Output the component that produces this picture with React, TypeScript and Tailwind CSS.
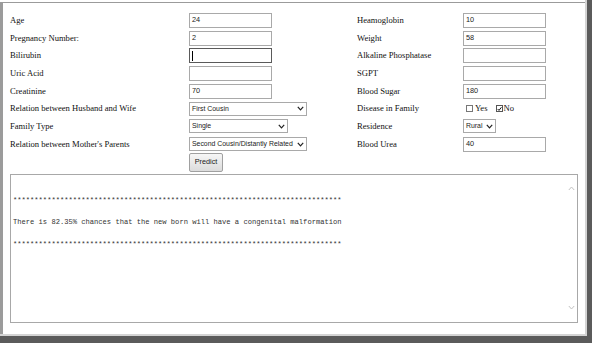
import React from 'react';

const serif = "font-['Liberation_Serif','Times_New_Roman',serif]";
const sans = "font-['Liberation_Sans',Arial,sans-serif]";

const Label = ({ children }: { children: React.ReactNode }) => (
  <div className={`${serif} text-[8.6px] text-[#111] flex items-center`}>{children}</div>
);

const TextBox = ({ value, focused }: { value?: string; focused?: boolean }) => (
  <div className="flex items-center">
    <div
      className={`w-[83px] h-[15px] bg-white flex items-center pl-[2px] ${sans} text-[7.3px] text-[#222] border ${
        focused ? 'border-[#5a5a5a]' : 'border-[#a9a9a9]'
      }`}
    >
      {focused ? <div className="w-px h-[10px] bg-black" /> : value}
    </div>
  </div>
);

const Chevron = () => (
  <svg width="7" height="5" viewBox="0 0 7 5" className="shrink-0">
    <path d="M0.8 0.9 L3.5 3.9 L6.2 0.9" fill="none" stroke="#222" strokeWidth="1.2" />
  </svg>
);

const Select = ({ value, width }: { value: string; width: string }) => (
  <div className="flex items-center">
    <div
      className={`${width} h-[14px] bg-white border border-[#a9a9a9] flex items-center justify-between gap-[2px] pl-[2px] pr-[2px] ${sans} text-[6.9px] text-[#222]`}
    >
      <span className="whitespace-nowrap">{value}</span>
      <Chevron />
    </div>
  </div>
);

const Empty = () => <div />;

export default function App() {
  const stars = '*'.repeat(77);

  return (
    <div className="w-[592px] h-[343px] bg-[#5b5b5b] overflow-hidden">
      <div className="w-[587px] h-[336px] bg-[#d4d4d4] pr-[2px] pb-[2px]">
        <div className="h-full bg-white pt-[2px]">
          <div className="h-full border-t border-l-[3px] border-[#9b9b9b] pl-[7px] pt-[8.5px]">
            {/* form grid */}
            <div className="grid grid-cols-[179px_168px_106px_1fr] auto-rows-[17.7px]">
              <Label>Age</Label>
              <TextBox value="24" />
              <Label>Heamoglobin</Label>
              <TextBox value="10" />

              <Label>Pregnancy Number:</Label>
              <TextBox value="2" />
              <Label>Weight</Label>
              <TextBox value="58" />

              <Label>Bilirubin</Label>
              <TextBox focused />
              <Label>Alkaline Phosphatase</Label>
              <TextBox />

              <Label>Uric Acid</Label>
              <TextBox />
              <Label>SGPT</Label>
              <TextBox />

              <Label>Creatinine</Label>
              <TextBox value="70" />
              <Label>Blood Sugar</Label>
              <TextBox value="180" />

              <Label>Relation between Husband and Wife</Label>
              <Select value="First Cousin" width="w-[118px]" />
              <Label>Disease in Family</Label>
              <div className={`flex items-center ${serif} text-[8.6px] text-[#111] pl-[3px]`}>
                <div className="w-[7px] h-[7px] border border-[#777] bg-white mr-[2px]" />
                <span className="mr-[8px]">Yes</span>
                <div className="w-[7px] h-[7px] border border-[#555] bg-white mr-[1px] flex items-center justify-center">
                  <svg width="6" height="6" viewBox="0 0 6 6">
                    <path d="M0.8 3 L2.4 4.7 L5.3 0.9" fill="none" stroke="#111" strokeWidth="1.2" />
                  </svg>
                </div>
                <span>No</span>
              </div>

              <Label>Family Type</Label>
              <Select value="Single" width="w-[99px]" />
              <Label>Residence</Label>
              <Select value="Rural" width="w-[33px]" />

              <Label>Relation between Mother's Parents</Label>
              <Select value="Second Cousin/Distantly Related" width="w-[118px]" />
              <Label>Blood Urea</Label>
              <TextBox value="40" />

              <Empty />
              <div className="flex items-start">
                <button
                  className={`w-[34px] h-[19px] rounded-[2px] border border-[#a0a0a0] bg-gradient-to-b from-[#f6f6f6] to-[#dcdcdc] ${sans} text-[7.3px] text-[#222]`}
                >
                  Predict
                </button>
              </div>
              <Empty />
              <Empty />
            </div>

            {/* result area */}
            <div className="mt-[3px] w-[568px] h-[149px] border border-[#a8a8a8] bg-white flex">
              <div className="flex-1 pl-[2px] pt-[10px] font-['Liberation_Mono','Courier_New',monospace] text-[7.12px] leading-[10.8px] text-[#333] whitespace-pre">
                {`\n${stars}\n\nThere is 82.35% chances that the new born will have a congenital malformation\n\n${stars}`}
              </div>
              <div className="w-[12px] flex flex-col items-center justify-between pt-[11px] pb-[12px]">
                <svg width="7" height="5" viewBox="0 0 7 5">
                  <path d="M0.8 4 L3.5 1 L6.2 4" fill="none" stroke="#c2c2c2" strokeWidth="1" />
                </svg>
                <svg width="7" height="5" viewBox="0 0 7 5">
                  <path d="M0.8 1 L3.5 4 L6.2 1" fill="none" stroke="#c2c2c2" strokeWidth="1" />
                </svg>
              </div>
            </div>
          </div>
        </div>
      </div>
    </div>
  );
}
